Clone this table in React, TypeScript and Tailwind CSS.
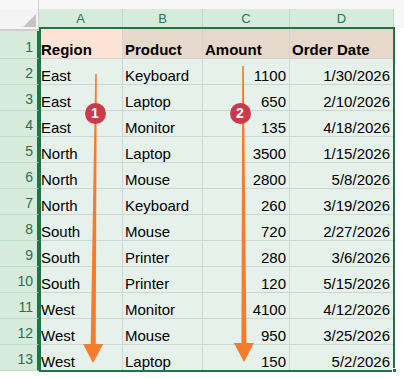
import React from 'react'

const rows: [string, string, string, string][] = [
  ['East', 'Keyboard', '1100', '1/30/2026'],
  ['East', 'Laptop', '650', '2/10/2026'],
  ['East', 'Monitor', '135', '4/18/2026'],
  ['North', 'Laptop', '3500', '1/15/2026'],
  ['North', 'Mouse', '2800', '5/8/2026'],
  ['North', 'Keyboard', '260', '3/19/2026'],
  ['South', 'Mouse', '720', '2/27/2026'],
  ['South', 'Printer', '280', '3/6/2026'],
  ['South', 'Printer', '120', '5/15/2026'],
  ['West', 'Monitor', '4100', '4/12/2026'],
  ['West', 'Mouse', '950', '3/25/2026'],
  ['West', 'Laptop', '150', '5/2/2026'],
]

const cols = 'grid grid-cols-[39px_84px_80px_87px_104px_1fr]'

function Arrow({ x1, y1, x2, y2 }: { x1: number; y1: number; x2: number; y2: number }) {
  const headH = 19
  const headW = 10
  const by = y2 - headH
  const bx = x1 + ((x2 - x1) * (by - y1)) / (y2 - y1)
  return (
    <polygon
      fill="#f47c2c"
      points={`${x1 - 0.8},${y1} ${x1 + 0.8},${y1} ${bx + 2.5},${by} ${bx + headW},${by} ${x2},${y2} ${bx - headW},${by} ${bx - 2.5},${by}`}
    />
  )
}

function Badge({ cx, cy, n }: { cx: number; cy: number; n: string }) {
  return (
    <div
      className="absolute w-[21px] h-[21px] rounded-full bg-[#c93a4b] text-white text-[14px] font-bold flex items-center justify-center leading-none"
      style={{ left: cx - 10.5, top: cy - 10.5 }}
    >
      {n}
    </div>
  )
}

export default function App() {
  return (
    <div className="relative w-[404px] h-[379px] bg-white overflow-hidden font-['Liberation_Sans',Arial,sans-serif] text-black">
      <div className="h-[9px] flex">
        <div className="w-[39px] border-r border-[#d0d0d0] bg-[#f7f7f7]" />
        <div className="flex-1 bg-[#f7f7f7]" />
      </div>

      {/* column headers */}
      <div className={`${cols} h-[19px]`}>
        <div className="relative bg-[#f4f4f4] border-r border-b-2 border-[#cfcfcf]">
          <div className="absolute right-[2px] bottom-[2px] w-0 h-0 border-l-[13px] border-l-transparent border-b-[13px] border-b-[#c4c4c4]" />
        </div>
        {['A', 'B', 'C', 'D'].map((c) => (
          <div
            key={c}
            className="bg-[#d5ecdc] border-r border-[#b9dcc4] border-b-2 border-b-[#217346] text-[13px] text-[#2f7350] flex items-center justify-center"
          >
            {c}
          </div>
        ))}
        <div className="bg-[#f7f7f7] border-b border-[#d8d8d8]" />
      </div>

      {/* row 1 */}
      <div className={`${cols} h-[31px]`}>
        <div className="bg-[#d6ebdc] border-b border-[#bfdcc8] border-r-2 border-r-[#217346] text-[14px] leading-none text-[#2e6b4b] flex items-end justify-end pr-[4px] pb-[4px]">
          1
        </div>
        <div className="bg-[#fde2d6] border-r border-b border-[#d3d3d3] text-[15px] leading-none font-bold flex items-end pl-[2px] pb-[1px]">
          Region
        </div>
        {['Product', 'Amount', 'Order Date'].map((h) => (
          <div
            key={h}
            className="bg-[#e6d8ca] border-r border-b border-[#d3d3d3] text-[15px] leading-none font-bold flex items-end pl-[2px] pb-[1px]"
          >
            {h}
          </div>
        ))}
        <div className="bg-white" />
      </div>

      {rows.map((r, i) => (
        <div key={i} className={`${cols} h-[26px]`}>
          <div className="bg-[#d6ebdc] border-b border-[#bfdcc8] border-r-2 border-r-[#217346] text-[14px] leading-none text-[#2e6b4b] flex items-end justify-end pr-[4px] pb-[4px]">
            {i + 2}
          </div>
          <div className="bg-[#e7f1eb] border-r border-b border-[#cfd6d1] text-[15px] leading-none flex items-end pl-[2px] pb-[1px]">
            {r[0]}
          </div>
          <div className="bg-[#e7f1eb] border-r border-b border-[#cfd6d1] text-[15px] leading-none flex items-end pl-[2px] pb-[1px]">
            {r[1]}
          </div>
          <div className="bg-[#e7f1eb] border-r border-b border-[#cfd6d1] text-[15px] leading-none flex items-end justify-end pr-[3px] pb-[1px]">
            {r[2]}
          </div>
          <div className="bg-[#e7f1eb] border-r border-b border-[#cfd6d1] text-[15px] leading-none flex items-end justify-end pr-[3px] pb-[1px]">
            {r[3]}
          </div>
          <div className="bg-white" />
        </div>
      ))}

      {/* selection outline */}
      <div className="absolute left-[39px] top-[27px] w-[356px] h-[345px] border-2 border-[#217346] pointer-events-none" />
      <div className="absolute left-[392px] top-[368px] w-[5px] h-[5px] bg-[#217346] border border-white" />

      <svg className="absolute left-0 top-0 pointer-events-none" width="404" height="379">
        <Arrow x1={96} y1={74} x2={93} y2={363} />
        <Arrow x1={243} y1={66} x2={244} y2={362} />
      </svg>

      <Badge cx={95} cy={113} n="1" />
      <Badge cx={240} cy={113} n="2" />
    </div>
  )
}
